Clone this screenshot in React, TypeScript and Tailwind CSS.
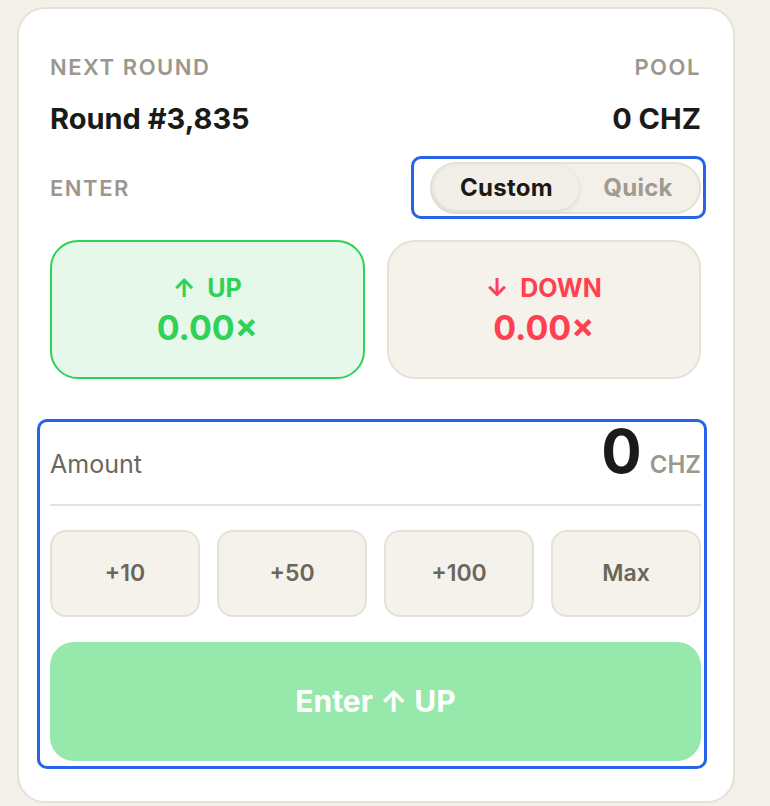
const label = "text-[22px] leading-[28px] font-semibold tracking-[0.07em] text-[#9c978d]";

function Chip({ children }: { children: string }) {
  return (
    <button className="h-[87px] flex-1 rounded-[16px] border-2 border-[#e6e1d5] bg-[#f5f2eb] text-[23px] font-semibold text-[#6b665c]">
      {children}
    </button>
  );
}

export default function App() {
  return (
    <div
      className="w-[770px] h-[806px] overflow-hidden bg-[#f3f0ea] pl-[17px] pt-[7px]"
      style={{ fontFamily: "Inter, 'Noto Sans', sans-serif" }}
    >
      <div className="relative w-[718px] h-[796px] rounded-[28px] border-2 border-[#e6e1d5] bg-white pl-[31px] pr-[32px] pt-[44px]">
        <div className="flex justify-between">
          <span className={label}>NEXT ROUND</span>
          <span className={label}>POOL</span>
        </div>
        <div className="mt-[21px] flex justify-between text-[29px] leading-[34px] font-bold text-[#1a1a18]">
          <span>Round #3,835</span>
          <span>0 CHZ</span>
        </div>

        <div className="mt-[26px] flex items-center justify-between">
          <span className={label}>ENTER</span>
          <div className="flex h-[52px] w-[271px] items-center rounded-full border-2 border-[#e6e1d5] bg-[#f3f0ea] p-[2px]">
            <div className="flex h-full w-[145px] items-center justify-center rounded-full bg-[#f2efe9] text-[24px] font-bold tracking-[0.01em] text-[#1a1a18] shadow-[0_1px_4px_rgba(0,0,0,0.12)]">
              Custom
            </div>
            <div className="flex flex-1 items-center justify-center text-[24px] font-bold tracking-[0.01em] text-[#a09b91]">
              Quick
            </div>
          </div>
        </div>

        <div className="mt-[26px] flex gap-[22px]">
          <div className="flex h-[139px] flex-1 flex-col items-center justify-center rounded-[28px] border-2 border-[#30d158] bg-[#e6f8ea]">
            <span className="text-[25px] leading-[30px] font-bold text-[#30d158]">↑&nbsp; UP</span>
            <span className="mt-[6px] text-[34px] leading-[38px] font-bold text-[#30d158]">0.00×</span>
          </div>
          <div className="flex h-[139px] flex-1 flex-col items-center justify-center rounded-[28px] border-2 border-[#e6e1d5] bg-[#f5f2eb]">
            <span className="text-[25px] leading-[30px] font-bold text-[#ff404f]">↓&nbsp; DOWN</span>
            <span className="mt-[6px] text-[34px] leading-[38px] font-bold text-[#ff404f]">0.00×</span>
          </div>
        </div>

        <div className="mt-[42px] flex items-baseline justify-between border-b-2 border-[#e6e1d5] pb-[20px]">
          <span className="text-[25px] text-[#6b665c]">Amount</span>
          <span className="flex items-baseline gap-[8px]">
            <span className="text-[60px] leading-[60px] font-bold text-[#1a1a18]">0</span>
            <span className="text-[24px] font-semibold text-[#9c978d]">CHZ</span>
          </span>
        </div>

        <div className="mt-[24px] flex gap-[17px]">
          <Chip>+10</Chip>
          <Chip>+50</Chip>
          <Chip>+100</Chip>
          <Chip>Max</Chip>
        </div>

        <button className="mt-[25px] flex h-[119px] w-full items-center justify-center rounded-[24px] bg-[#97e8ab] text-[30px] font-bold text-white">
          Enter ↑ UP
        </button>

        <div className="pointer-events-none absolute left-[392px] top-[147px] h-[63px] w-[295px] rounded-[10px] border-[3px] border-[#2563eb]" />
        <div className="pointer-events-none absolute left-[18px] top-[410px] h-[350px] w-[670px] rounded-[10px] border-[3px] border-[#2563eb]" />
      </div>
    </div>
  );
}
